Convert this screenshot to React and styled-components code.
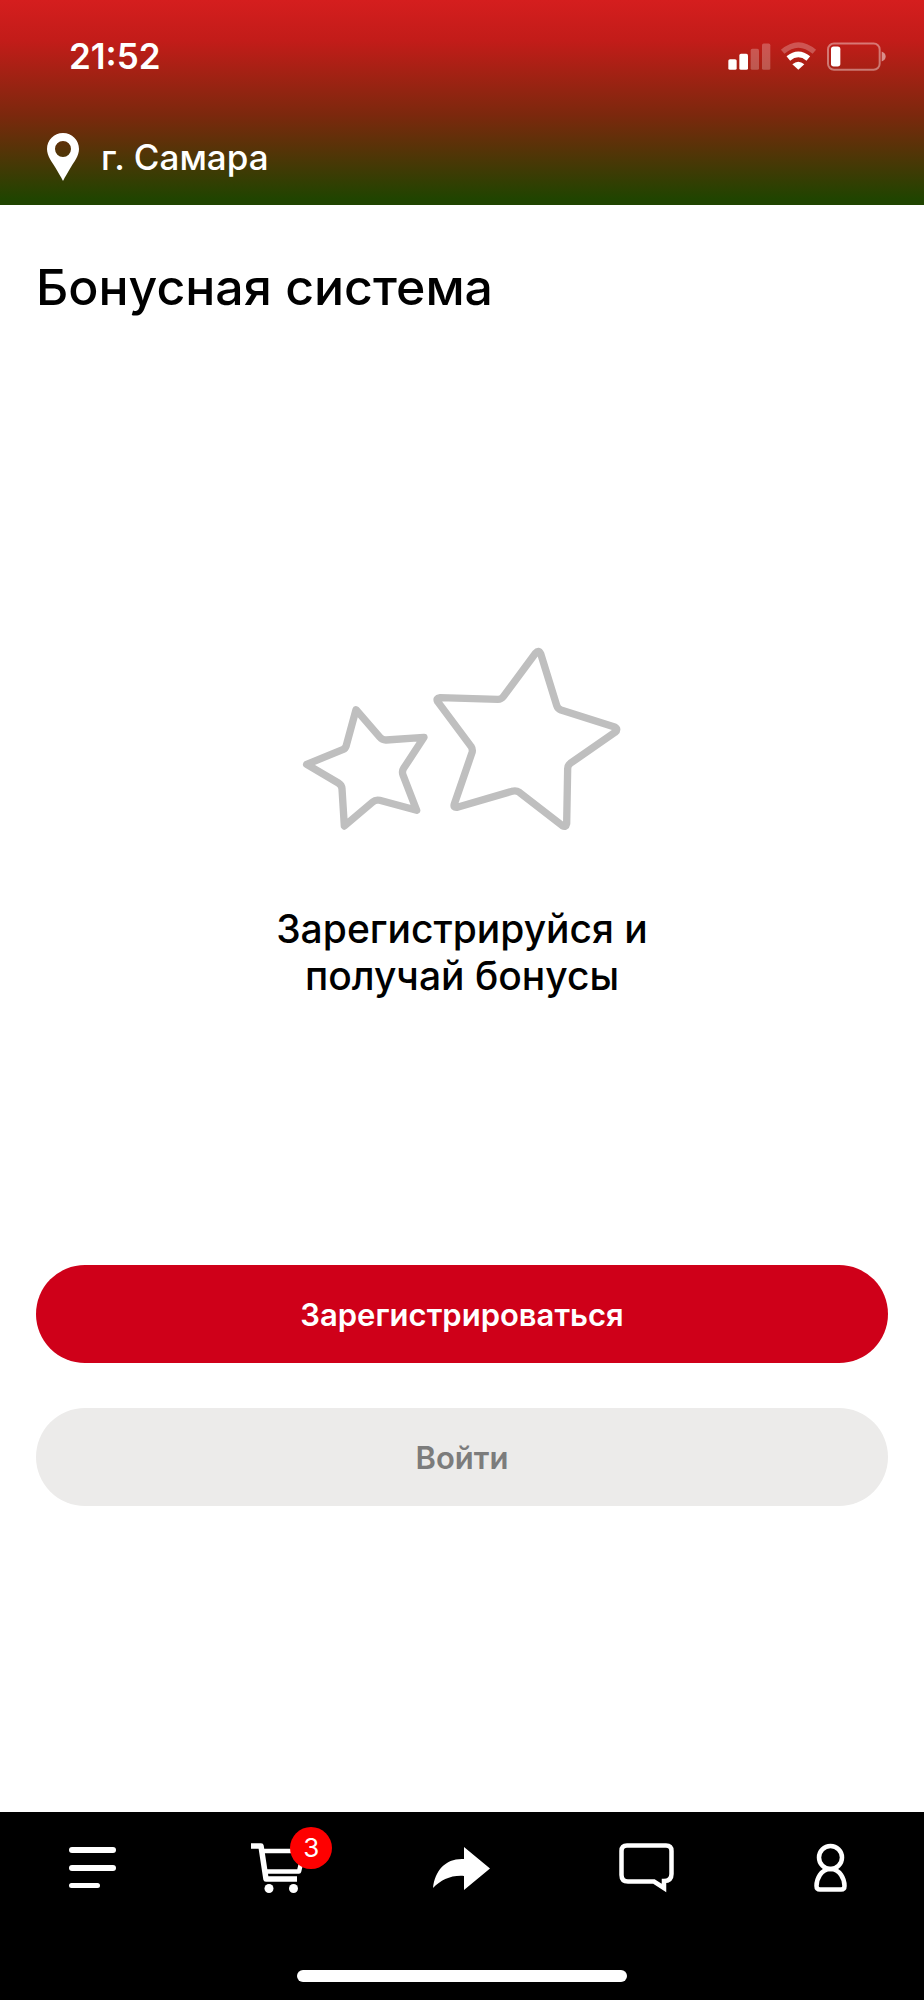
import React from 'react';
import styled, { createGlobalStyle } from 'styled-components';

const navItems = [
    { id: 'menu', label: 'Меню', Icon: MenuIcon },
    { id: 'cart', label: 'Корзина', Icon: CartIcon, count: 3 },
    { id: 'share', label: 'Поделиться', Icon: ShareIcon },
    { id: 'chat', label: 'Сообщения', Icon: ChatIcon },
    { id: 'profile', label: 'Профиль', Icon: ProfileIcon },
];

function StatusIcons() {
    return (
        <svg width='158' height='29' viewBox='84 64 474 86' fill='#fff'>
            <rect x='85' y='115' width='25' height='32' rx='5' />
            <rect x='118' y='99' width='26' height='48' rx='5' />
            <g opacity='0.25'>
                <rect x='152' y='84' width='25' height='63' rx='5' />
                <rect x='186' y='68' width='25' height='79' rx='5' />
            </g>
            <path
                d='M248 93 Q295 52 343 93'
                fill='none'
                stroke='#fff'
                strokeWidth='16'
                opacity='0.25'
            />
            <path
                d='M265 113 Q295 88 325 113'
                fill='none'
                stroke='#fff'
                strokeWidth='17'
            />
            <path d='M277 130 Q295 115 313 130 L295 147 Z' />
            <rect
                x='384'
                y='68'
                width='155'
                height='79'
                rx='18'
                fill='none'
                stroke='#fff'
                strokeWidth='6'
                opacity='0.4'
            />
            <path d='M545 92 Q557 97 557 107 Q557 117 545 122 Z' opacity='0.5' />
            <rect x='393' y='77' width='28' height='60' rx='8' />
        </svg>
    );
}

function PinIcon() {
    return (
        <svg width='32' height='48' viewBox='0 0 32 48' fill='#fff'>
            <path
                fillRule='evenodd'
                d='M16 0 C7 0 0 7 0 16 C0 23 5 29 8 34 C11 39 14 44 16 48 C18 44 21 39 24 34 C27 29 32 23 32 16 C32 7 25 0 16 0 Z M16 8 A8 8 0 1 1 16 24 A8 8 0 1 1 16 8 Z'
            />
        </svg>
    );
}

function StarsIcon() {
    return (
        <svg
            width='320'
            height='184'
            viewBox='36 51 960 552'
            fill='none'
            stroke='#bfbfbf'
            strokeWidth='22'
            strokeLinejoin='round'
        >
            <path d='M198 239 L270 322 Q277 331 289 330 L402 322 L341 415 Q335 424 339 435 L380 541 L269 511 Q257 508 248 516 L163 588 L156 476 Q155 465 145 459 L50 403 L158 359 Q167 355 169 346 Z' />
            <path d='M737 69 Q746 58 752 71 L800 226 Q803 236 813 240 L974 291 Q986 298 975 307 L841 400 Q833 406 833 416 L830 581 Q828 593 817 587 L688 487 Q678 480 666 484 L502 532 Q489 534 493 522 L546 368 Q549 358 543 349 L443 215 Q437 204 450 203 L624 208 Q634 208 640 200 Z' />
        </svg>
    );
}

function MenuIcon() {
    return (
        <svg width='60' height='60' viewBox='0 0 60 60' fill='#fff'>
            <rect x='7' y='9' width='47' height='6' rx='3' />
            <rect x='7' y='27' width='47' height='6' rx='3' />
            <rect x='7' y='45' width='31' height='5' rx='2.5' />
        </svg>
    );
}

function CartIcon() {
    return (
        <svg
            width='60'
            height='60'
            viewBox='0 0 60 60'
            fill='none'
            stroke='#fff'
            strokeWidth='5.5'
            strokeLinejoin='round'
        >
            <path d='M4 8 H14 L19 41 H50' />
            <path d='M15 13 H57 L52 33.5 H18' strokeWidth='4.5' />
            <circle cx='22' cy='50.5' r='4.5' fill='#fff' stroke='none' />
            <circle cx='46.5' cy='50.5' r='4.5' fill='#fff' stroke='none' />
        </svg>
    );
}

function ShareIcon() {
    return (
        <svg width='60' height='60' viewBox='0 0 60 60' fill='#fff'>
            <path d='M1 50 C3 32 14 20 32 21 V9 L58 30.5 L32 52 V38 C19 37 9 42 1 50 Z' />
        </svg>
    );
}

function ChatIcon() {
    return (
        <svg
            width='60'
            height='60'
            viewBox='0 0 60 60'
            fill='none'
            stroke='#fff'
            strokeWidth='4.5'
        >
            <path d='M10 7.5 H49 Q54.5 7.5 54.5 13 V36 Q54.5 43 47 43 V50 L37 43.5 H11 Q4.5 43.5 4.5 37 V13 Q4.5 7.5 10 7.5 Z' />
        </svg>
    );
}

function ProfileIcon() {
    return (
        <svg
            width='60'
            height='60'
            viewBox='0 0 60 60'
            fill='none'
            stroke='#fff'
            strokeWidth='4.5'
        >
            <circle cx='28.5' cy='19.5' r='11.5' />
            <path d='M28.5 31 C19 31 14.5 41 14.5 48 Q14.5 51.5 18 51.5 H39 Q42.5 51.5 42.5 48 C42.5 41 38 31 28.5 31 Z' />
        </svg>
    );
}

const App = () => {
    return (
        <>
            <GlobalStyle />
            <Page>
                <Header>
                    <StatusBar>
                        <time>21:52</time>
                        <StatusIcons />
                    </StatusBar>
                    <CityButton type='button'>
                        <PinIcon />
                        г. Самара
                    </CityButton>
                </Header>
                <Main>
                    <Title>Бонусная система</Title>
                    <Promo>
                        <StarsIcon />
                        <p>Зарегистрируйся и получай бонусы</p>
                    </Promo>
                    <Actions>
                        <Button type='button' $primary>
                            Зарегистрироваться
                        </Button>
                        <Button type='button'>Войти</Button>
                    </Actions>
                </Main>
                <BottomBar>
                    <Nav>
                        {navItems.map(({ id, label, Icon, count }) => (
                            <NavButton key={id} type='button' aria-label={label}>
                                <IconBox>
                                    <Icon />
                                    {count && <Badge>{count}</Badge>}
                                </IconBox>
                            </NavButton>
                        ))}
                    </Nav>
                    <HomeIndicator />
                </BottomBar>
            </Page>
        </>
    );
};

const GlobalStyle = createGlobalStyle`
    * {
        box-sizing: border-box;
        margin: 0;
        padding: 0;
    }
    body {
        background: #fff;
        color: #000;
        font-family: Inter, 'Liberation Sans', sans-serif;
    }
    button {
        border: none;
        background: transparent;
        font-family: inherit;
        cursor: pointer;
    }
    svg {
        display: block;
        flex-shrink: 0;
    }
`;

const Page = styled.div`
    min-height: 100vh;
    display: flex;
    flex-direction: column;
`;

const Header = styled.header`
    padding-bottom: 3px;
    color: #fff;
    background: linear-gradient(#d51e1e, #c21c19 20%, #7c280d 56%, #204400 97%);
`;

const StatusBar = styled.div`
    display: flex;
    align-items: center;
    justify-content: space-between;
    height: 112px;
    padding: 0 38px 0 69px;
    font-size: 35px;
    font-weight: 600;
`;

const CityButton = styled.button`
    display: flex;
    align-items: center;
    gap: 22px;
    height: 90px;
    padding: 0 47px;
    color: #fff;
    font-size: 35px;
    font-weight: 500;
`;

const Main = styled.main`
    flex: 1;
    display: flex;
    flex-direction: column;
    padding: 52px 36px 0;
`;

const Title = styled.h1`
    font-size: 50px;
    font-weight: 500;
    line-height: 60px;
`;

const Promo = styled.section`
    display: flex;
    flex-direction: column;
    align-items: center;
    gap: 74px;
    margin-top: 330px;
    p {
        max-width: 400px;
        text-align: center;
        font-size: 39px;
        font-weight: 500;
        line-height: 47px;
    }
`;

const Actions = styled.div`
    display: flex;
    flex-direction: column;
    gap: 45px;
    margin-top: 266px;
`;

const Button = styled.button`
    height: 98px;
    border-radius: 49px;
    font-size: 31px;
    font-weight: 600;
    color: ${({ $primary }) => ($primary ? '#fff' : '#7c7c7c')};
    background: ${({ $primary }) => ($primary ? '#cf0019' : '#ecebea')};
`;

const BottomBar = styled.footer`
    display: flex;
    flex-direction: column;
    align-items: center;
    gap: 72px;
    padding: 26px 0 18px;
    background: #000;
`;

const Nav = styled.nav`
    display: grid;
    grid-template-columns: repeat(5, 1fr);
    width: 100%;
`;

const NavButton = styled.button`
    display: flex;
    justify-content: center;
`;

const IconBox = styled.span`
    position: relative;
`;

const Badge = styled.span`
    position: absolute;
    top: -11px;
    left: 43px;
    width: 42px;
    height: 42px;
    border-radius: 50%;
    background: #fe0000;
    color: #fff;
    font-size: 26px;
    line-height: 42px;
    text-align: center;
`;

const HomeIndicator = styled.div`
    width: 330px;
    max-width: 60%;
    height: 12px;
    border-radius: 6px;
    background: #fff;
`;

export default App;
